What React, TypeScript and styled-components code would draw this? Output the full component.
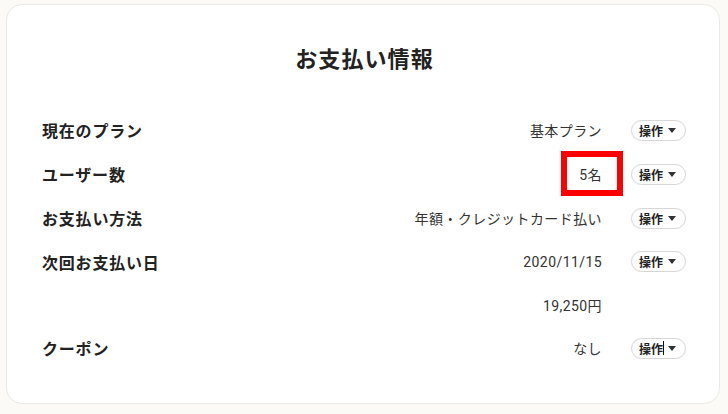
import React from "react";
import styled, { createGlobalStyle } from "styled-components";

const Global = createGlobalStyle`
  html, body { margin: 0; padding: 0; background: #fbfaf7; }
  body { font-family: "Roboto", "Noto Sans CJK JP", "Noto Sans", sans-serif; color: #222; }
`;

const Page = styled.div`
  width: 728px;
  height: 414px;
  padding: 4px 0 0 6px;
  box-sizing: border-box;
`;

const Card = styled.section`
  width: 714px;
  height: 400px;
  box-sizing: border-box;
  background: #fff;
  border: 1px solid #ece9e4;
  border-radius: 16px;
  padding: 40px 32px 0 35px;
`;

const Title = styled.h1`
  margin: 0 0 33px;
  text-align: center;
  font-size: 22px;
  line-height: 30px;
  font-weight: 700;
  letter-spacing: 0.05em;
  color: #222;
`;

const List = styled.div`
  display: flex;
  flex-direction: column;
`;

const Row = styled.div<{ $h?: number }>`
  display: grid;
  grid-template-columns: 1fr auto 56px;
  column-gap: 30px;
  align-items: center;
  height: ${(p) => p.$h ?? 44}px;
`;

const Label = styled.div`
  font-size: 16px;
  font-weight: 700;
  letter-spacing: 0.05em;
  color: #222;
`;

const Value = styled.div`
  position: relative;
  font-size: 14px;
  letter-spacing: 0.03em;
  color: #333;
  text-align: right;
  margin-right: -1px;
`;

const Highlight = styled.span`
  position: absolute;
  left: -18px;
  right: -21px;
  top: -13px;
  bottom: -12px;
  border: 6px solid #ff0000;
  pointer-events: none;
`;

const ActionButton = styled.button`
  position: relative;
  box-sizing: border-box;
  width: 55px;
  height: 21px;
  padding: 0 0 0 7px;
  border: 1px solid #d6d6d6;
  border-radius: 11px;
  background: #fff;
  display: flex;
  align-items: center;
  gap: 5px;
  font-family: inherit;
  font-size: 12px;
  font-weight: 700;
  color: #222;
  cursor: pointer;
`;

const Caret = styled.span`
  width: 0;
  height: 0;
  border-left: 4.5px solid transparent;
  border-right: 4.5px solid transparent;
  border-top: 5px solid #333;
`;

const IBeam = styled.span`
  position: absolute;
  left: 31px;
  top: 2px;
  width: 1px;
  height: 14px;
  background: #111;
`;

type Item = { label: string; value: string; action: boolean; mark?: boolean; beam?: boolean; h?: number };

const items: Item[] = [
  { label: "現在のプラン", value: "基本プラン", action: true },
  { label: "ユーザー数", value: "5名", action: true, mark: true },
  { label: "お支払い方法", value: "年額・クレジットカード払い", action: true },
  { label: "次回お支払い日", value: "2020/11/15", action: true, h: 43 },
  { label: "", value: "19,250円", action: false, h: 43 },
  { label: "クーポン", value: "なし", action: true, beam: true },
];

export default function App() {
  return (
    <>
      <Global />
      <Page>
        <Card>
          <Title>お支払い情報</Title>
          <List>
            {items.map((it, i) => (
              <Row key={i} $h={it.h}>
                <Label>{it.label}</Label>
                <Value>
                  {it.value}
                  {it.mark && <Highlight />}
                </Value>
                {it.action ? (
                  <ActionButton type="button">
                    操作
                    <Caret />
                    {it.beam && <IBeam />}
                  </ActionButton>
                ) : (
                  <span />
                )}
              </Row>
            ))}
          </List>
        </Card>
      </Page>
    </>
  );
}
